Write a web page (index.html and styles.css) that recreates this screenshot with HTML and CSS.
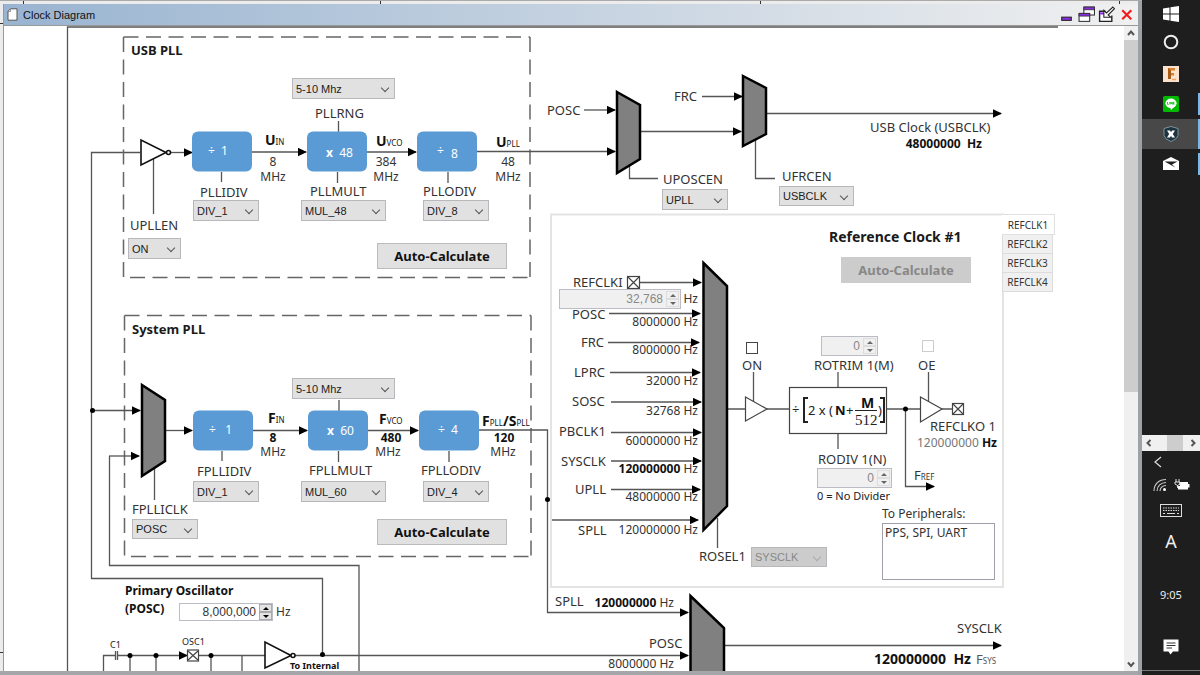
FILE: index.html
```html
<!DOCTYPE html>
<html lang="en">
<head>
<meta charset="utf-8">
<title>Clock Diagram</title>
<link rel="stylesheet" href="styles.css">
</head>
<body>
<div class="screen">
<main class="desk">
<section class="window">
<header class="titlebar">
  <svg class="doc-icon" viewBox="0 0 11 13"><path d="M3.5 .8H10V12.2H1V3.3Z" fill="#fff" stroke="#555"/><path d="M3.5 1V3.5H1" fill="none" stroke="#777" stroke-width=".7"/></svg>
  <h1>Clock Diagram</h1>
  <div class="window-buttons">
    <button aria-label="Minimize"><svg viewBox="0 0 16 16"><rect x="3.5" y="10.5" width="9" height="3" fill="#8a2be2" stroke="#222"/></svg></button>
    <button aria-label="Restore"><svg viewBox="0 0 16 16"><g fill="#fff" stroke="#333"><rect x="5.500" y="1" width="10" height="7.500"/><rect x="1" y="7" width="10" height="7.500"/></g><path d="M5.500 1h10v2.500h-10zM1 7h10v2.500H1z" fill="#8a2be2" stroke="#333" stroke-width=".8"/></svg></button>
    <button aria-label="Dock"><svg viewBox="0 0 16 16"><path d="M7 5H1.500V14.500H13V9" fill="#fff" stroke="#222" stroke-width="1.300"/><path d="M2 6h5v2H2z" fill="#8a2be2"/><path d="M14 1L15.500 2.500 9.500 8.500 12 10.500H5.500V4L8 6.500Z" fill="#fff" stroke="#222"/></svg></button>
    <button aria-label="Close"><svg viewBox="0 0 16 16"><path d="M4 4L12.500 12.500M12.500 4L4 12.500" stroke="#f01c1c" stroke-width="2"/></svg></button>
  </div>
</header>
<div class="body">
<div class="canvas">
<svg class="wires" width="1117" height="645" viewBox="4 26 1117 645">
  <defs>
    <marker id="arrow" markerUnits="userSpaceOnUse" markerWidth="9" markerHeight="9" refX="8" refY="4.5" orient="auto"><path d="M0 .3L9 4.500 0 8.700Z" fill="#000"/></marker>
  </defs>
  <g class="line">
    <path d="M67.500 671V27H1058"/>
    <path d="M140 152.500H91.500V578.500H322.500V655"/>
    <path d="M109.500 456V565.500H359V671"/>
    <path d="M153.500 159V214M221.500 172V182M338.500 121V132M337.500 172V183M448 172V183"/>
    <path d="M154.500 468V500M222 451V461M339 400V411M338.500 451V462M449 451V462"/>
    <path d="M629.500 166V178.500H658M755.500 140V178.500H775"/>
  </g>
  <g class="dash">
    <path d="M123.500 37H530M123.500 37V277M530 37V277M130 277.500H530"/>
    <path d="M124.500 315.500H531M124.500 315.500V556M531 315.500V556M131 556.500H531"/>
  </g>
  <g class="panel-lines">
    <rect x="551" y="214.500" width="452" height="372.500"/>
  </g>
  <g class="line arrowed">
    <path d="M171 152.500H192"/><path d="M252 152H306"/><path d="M367 152H416"/><path d="M477 151.500H615"/>
    <path d="M92 410.500H140"/><path d="M109 456H139"/><path d="M165 430.500H192"/><path d="M253 430.500H307"/><path d="M368 430.500H418"/>
    <path d="M478 430H547.500V612.500H688"/>
    <path d="M584 110H615"/><path d="M640 131.500H741"/><path d="M702 96.500H742"/><path d="M766 113.500H1001"/>
    <path d="M640 282.500H701"/><path d="M609 313.500H700"/><path d="M608 342.500H699"/><path d="M610 372.500H700"/><path d="M611 402H701"/><path d="M611 432.500H701"/><path d="M611 461H701"/><path d="M611 489.500H700"/><path d="M552 520H698"/>
    <path d="M905.500 409V486.500H934"/>
    <path d="M295 655.500H688"/><path d="M724 645.500H1001"/><path d="M117 655.500H187"/>
  </g>
  <g class="line">
    <path d="M717.500 518V548M727 409H745M767 409H789M753.500 372V402M838 372V387M838 434V449M887 409H920M928.500 372V402M942 409H952"/>
    <path d="M103.500 671V655.500H115M115.500 651V660M117.500 651V660M199 655.500H265M130 655V671M156 655V671M211 655V671M242 655V671"/>
  </g>
  <g class="shape">
    <path d="M745.500 397V421L767 409Z"/><path d="M920.500 397V422L942 409Z"/>
    <rect x="789.500" y="387.500" width="97" height="46"/>
    <rect x="627.500" y="276.500" width="12" height="12"/><path d="M628 277L639 288M639 277L628 288"/>
    <rect x="952.500" y="403.500" width="11" height="11"/><path d="M953 404L963 414M963 404L953 414"/>
    <rect x="187.500" y="650" width="11" height="11"/><path d="M188 651L198 660M198 651L188 660"/>
  </g>
  <g class="shape heavy">
    <path d="M141 140V165L166 152.500Z"/><circle cx="168.500" cy="152.500" r="2"/>
    <path d="M265 642V668L291 655.500Z"/><circle cx="293" cy="655.500" r="2"/>
  </g>
  <g class="mux">
    <path d="M617 92L640 105V159L617 173Z"/><path d="M743 76L766 88V134L743 146Z"/>
    <path d="M142 385L165 400V461L142 476Z"/><path d="M703.500 263L727 286V506L703.500 530Z"/>
    <path d="M690.500 596L724 628V680H690.500Z"/>
  </g>
  <g class="dot">
    <circle cx="92.500" cy="410.500" r="2.500"/><circle cx="547.500" cy="499.500" r="2.500"/><circle cx="905.500" cy="409" r="2.500"/><circle cx="322.500" cy="654.500" r="2.500"/>
    <circle cx="130" cy="655.500" r="2.500"/><circle cx="156" cy="655.500" r="2.500"/><circle cx="211" cy="655.500" r="2.500"/>
  </g>
  <g class="block">
    <rect x="192" y="131.500" width="60" height="40" rx="6"/><rect x="307" y="131.500" width="60" height="40" rx="6"/><rect x="417" y="131.500" width="60" height="40" rx="6"/>
    <rect x="193" y="410.500" width="60" height="40" rx="6"/><rect x="308" y="410.500" width="60" height="40" rx="6"/><rect x="419" y="410.500" width="60" height="40" rx="6"/>
  </g>
  <g class="block-text">
    <text x="208" y="155">÷&#160; 1</text><text x="326" y="157"><tspan font-weight="bold">x</tspan>&#160; 48</text><text x="437" y="155">÷</text><text x="451" y="158">8</text>
    <text x="209" y="434">÷&#160;&#160; 1</text><text x="327" y="435"><tspan font-weight="bold">x</tspan>&#160; 60</text><text x="438" y="434">÷&#160; 4</text>
  </g>
  <g class="signal">
    <text x="265" y="145">U<tspan class="sub">IN</tspan></text><text x="376" y="146">U<tspan class="sub">VCO</tspan></text><text x="496" y="147">U<tspan class="sub">PLL</tspan></text>
    <text x="268" y="423">F<tspan class="sub">IN</tspan></text><text x="379" y="424">F<tspan class="sub">VCO</tspan></text><text x="482" y="426">F<tspan class="sub">PLL</tspan>/S<tspan class="sub">PLL</tspan></text>
  </g>
  <g class="value middle">
    <text x="273" y="166">8</text><text x="273" y="181">MHz</text><text x="386" y="166">384</text><text x="386" y="181">MHz</text><text x="508" y="166">48</text><text x="508" y="181">MHz</text>
    <text class="bold" x="273" y="442">8</text><text x="273" y="456">MHz</text><text class="bold" x="391" y="442">480</text><text x="388" y="456">MHz</text><text class="bold" x="504" y="442">120</text><text x="503" y="456">MHz</text>
  </g>
  <g class="name">
    <text x="547" y="115">POSC</text><text x="674" y="101">FRC</text><text x="870" y="132">USB Clock (USBCLK)</text>
    <text x="572" y="319">POSC</text><text x="581" y="347">FRC</text><text x="574" y="377">LPRC</text><text x="572" y="406">SOSC</text><text x="559" y="436">PBCLK1</text><text x="561" y="466">SYSCLK</text><text x="575" y="494">UPLL</text><text x="578" y="535">SPLL</text>
    <text x="930" y="431">REFCLKO 1</text><text x="914" y="480">F<tspan class="sub">REF</tspan></text>
    <text x="555" y="606">SPLL</text><text x="649" y="648">POSC</text><text x="957" y="633">SYSCLK</text><text class="thin" x="976" y="664">F<tspan class="sub">SYS</tspan></text>
  </g>
  <g class="value end">
    <text x="698" y="303">Hz</text><text x="698" y="326">8000000 Hz</text><text x="698" y="354">8000000 Hz</text><text x="698" y="385">32000 Hz</text><text x="698" y="415">32768 Hz</text><text x="698" y="445">60000000 Hz</text><text x="698" y="473"><tspan class="bold">120000000</tspan> Hz</text><text x="698" y="501">48000000 Hz</text><text x="698" y="534">120000000 Hz</text>
    <text x="674" y="607"><tspan class="bold">120000000</tspan> Hz</text><text x="674" y="668">8000000 Hz</text>
    <text class="bold" x="982" y="148">48000000&#160; Hz</text><text x="997" y="447"><tspan fill="#777">120000000</tspan> <tspan class="bold">Hz</tspan></text>
    <text class="bold big" x="971" y="664">120000000&#160; Hz</text>
  </g>
  <g class="heading">
    <text x="131" y="55">USB PLL</text><text x="132" y="334">System PLL</text><text class="big" x="829" y="242">Reference Clock #1</text>
  </g>
  <g class="small"><text x="110" y="648">C1</text><text x="182" y="645">OSC1</text><text class="bold" x="290" y="669">To Internal</text><text class="note" x="817" y="500">0 = No Divider</text></g>
  <g class="formula">
    <text x="792" y="414">÷</text><path d="M808 398H804V422H808M880 398H884V422H880"/>
    <text x="808" y="415">2 x (</text><text class="bold" x="835" y="415">N</text><text x="846" y="415">+</text><text class="bold m" x="861" y="408">M</text><path class="bar" d="M855 410.500H877"/><text class="serif" x="855" y="425">512</text><text x="878" y="415">)</text>
  </g>
</svg>

<label class="pos l-pllrng" for="pllrng">PLLRNG</label>
<div class="pos pick wide p-pllrng"><select id="pllrng"><option>5-10 Mhz</option></select></div>
<label class="pos l-upllen" for="upllen">UPLLEN</label>
<div class="pos pick p-upllen"><select id="upllen"><option>ON</option></select></div>
<label class="pos l-pllidiv" for="pllidiv">PLLIDIV</label>
<div class="pos pick p-pllidiv"><select id="pllidiv"><option>DIV_1</option></select></div>
<label class="pos l-pllmult" for="pllmult">PLLMULT</label>
<div class="pos pick p-pllmult"><select id="pllmult"><option>MUL_48</option></select></div>
<label class="pos l-pllodiv" for="pllodiv">PLLODIV</label>
<div class="pos pick p-pllodiv"><select id="pllodiv"><option>DIV_8</option></select></div>
<button class="pos calc calc-usb">Auto-Calculate</button>

<div class="pos pick wide p-frng"><select aria-label="FPLLRNG"><option>5-10 Mhz</option></select></div>
<label class="pos l-fpllidiv" for="fpllidiv">FPLLIDIV</label>
<div class="pos pick p-fpllidiv"><select id="fpllidiv"><option>DIV_1</option></select></div>
<label class="pos l-fpllmult" for="fpllmult">FPLLMULT</label>
<div class="pos pick p-fpllmult"><select id="fpllmult"><option>MUL_60</option></select></div>
<label class="pos l-fpllodiv" for="fpllodiv">FPLLODIV</label>
<div class="pos pick p-fpllodiv"><select id="fpllodiv"><option>DIV_4</option></select></div>
<label class="pos l-fpllclk" for="fpllclk">FPLLICLK</label>
<div class="pos pick p-fpllclk"><select id="fpllclk"><option>POSC</option></select></div>
<button class="pos calc calc-sys">Auto-Calculate</button>

<label class="pos l-uposcen" for="uposcen">UPOSCEN</label>
<div class="pos pick p-uposcen"><select id="uposcen"><option>UPLL</option></select></div>
<label class="pos l-ufrcen" for="ufrcen">UFRCEN</label>
<div class="pos pick p-ufrcen"><select id="ufrcen"><option>USBCLK</option></select></div>

<nav class="pos tabs"><button class="current">REFCLK1</button><button>REFCLK2</button><button>REFCLK3</button><button>REFCLK4</button></nav>
<button class="pos calc calc-ref" disabled>Auto-Calculate</button>
<label class="pos l-refclki" for="refclki">REFCLKI</label>
<div class="pos spin off s-refclki"><input id="refclki" value="32,768" disabled><div class="steps"><button aria-label="Increase" disabled></button><button class="down" aria-label="Decrease" disabled></button></div></div>
<input class="pos check c-on" type="checkbox" id="on"><label class="pos l-on" for="on">ON</label>
<input class="pos check c-oe" type="checkbox" id="oe" disabled><label class="pos l-oe" for="oe">OE</label>
<div class="pos spin off s-rotrim"><input id="rotrim" value="0" disabled><div class="steps"><button aria-label="Increase" disabled></button><button class="down" aria-label="Decrease" disabled></button></div></div>
<label class="pos l-rotrim" for="rotrim">ROTRIM 1(M)</label>
<label class="pos l-rodiv" for="rodiv">RODIV 1(N)</label>
<div class="pos spin off s-rodiv"><input id="rodiv" value="0" disabled><div class="steps"><button aria-label="Increase" disabled></button><button class="down" aria-label="Decrease" disabled></button></div></div>
<label class="pos l-rosel" for="rosel">ROSEL1</label>
<div class="pos pick off p-rosel"><select id="rosel" disabled><option>SYSCLK</option></select></div>
<div class="pos peripherals"><label for="periph">To Peripherals:</label><textarea id="periph" readonly>PPS, SPI, UART</textarea></div>

<label class="pos posc-label" for="posc">Primary Oscillator<br>(POSC)</label>
<div class="pos spin s-posc"><input id="posc" value="8,000,000"><div class="steps"><button aria-label="Increase"></button><button class="down" aria-label="Decrease"></button></div></div>
<span class="pos posc-unit">Hz</span>
</div>
<div class="vscroll">
  <button aria-label="Scroll up"><svg viewBox="0 0 14 14"><path d="M4 9L7 5.500 10 9"/></svg></button>
  <div class="track"><div class="thumb"></div></div>
  <button aria-label="Scroll down"><svg viewBox="0 0 14 14"><path d="M4 5.500L7 9 10 5.500"/></svg></button>
</div>
</div>
</section>
</main>

<aside class="taskbar">
<div class="apps">
  <button class="short" aria-label="Start"><svg viewBox="0 0 16 16"><path d="M0 2.500L6.500 1.500V7.500H0ZM7.500 1.300L16 0V7.500H7.500ZM0 8.500H6.500V14.500L0 13.500ZM7.500 8.500H16V16L7.500 14.700Z" fill="#fff"/></svg></button>
  <button class="short" aria-label="Cortana"><svg viewBox="0 0 16 16"><circle cx="8" cy="8" r="6.300" fill="none" stroke="#eee" stroke-width="2"/></svg></button>
  <button class="spaced" aria-label="Fusion"><svg viewBox="0 0 16 16"><path d="M0 0H16V16H0Z" fill="#fbe3cf"/><path d="M5 2H12V4.500H8V7H11V9.500H8V13H5Z" fill="#d9822b"/><path d="M5 2L8 4.500V13H5Z" fill="#a85a18"/><path d="M9 13.500H13" stroke="#efa765" stroke-width="1.500"/></svg></button>
  <button class="running" aria-label="LINE"><svg viewBox="0 0 16 16"><rect width="16" height="16" rx="1.500" fill="#00b900"/><ellipse cx="8" cy="7.300" rx="5.600" ry="4.800" fill="#fff"/><path d="M7 11L8 14 11.500 10.500Z" fill="#fff"/><path d="M4.500 6V8.300H5.800M6.800 6V8.300M7.800 8.300V6L9.300 8.300V6M11.500 6.200H10.400V8.200H11.500M10.400 7.200H11.300" fill="none" stroke="#00b900" stroke-width=".8"/></svg></button>
  <button class="running active" aria-label="MPLAB X"><svg viewBox="0 0 16 16"><path d="M8 .5L15 2.500V9.500Q14.500 13 8 15.500Q1.500 13 1 9.500V2.500Z" fill="#1c3440" stroke="#7d929b"/><path d="M4 4.500H7L8 6.200 9 4.500H12L9.800 8 12 11.500H9L8 9.800 7 11.500H4L6.200 8Z" fill="#fff"/></svg></button>
  <button class="running" aria-label="Mail"><svg viewBox="0 0 16 16"><path d="M0 5L8 1 16 5V14H0Z" fill="#fff"/><path d="M1.500 5.500H14.500L9 8.500 12.500 11.500Z" fill="#1e1e1e"/></svg></button>
</div>
<div class="tray">
  <div class="hscroll"><button aria-label="Scroll left"><svg viewBox="0 0 14 14"><path d="M8.500 4L5.500 7 8.500 10"/></svg></button><div class="hthumb"></div><button aria-label="Scroll right"><svg viewBox="0 0 14 14"><path d="M5.500 4L8.500 7 5.500 10"/></svg></button></div>
  <button class="more" aria-label="Show hidden icons"><svg viewBox="0 0 12 12"><path d="M9 1L3 6 9 11" fill="none" stroke="#ddd" stroke-width="1.200"/></svg></button>
  <div class="status">
    <svg viewBox="0 0 14 14"><g fill="none" stroke="#ccc" stroke-width="1.100"><path d="M1 13C1 6 6 1.500 13 1.500"/><path d="M4 13C4 8 8 4.500 13 4.500"/><path d="M7 13C7 10 9.500 7.500 13 7.500"/></g><circle cx="11.500" cy="11.500" r="1.500" fill="#fff"/></svg>
    <svg class="battery" viewBox="0 0 16 14"><path d="M5 4H14V6H15.500V9.500H14V11.500H4V8H6Z" fill="#fff"/><path d="M2 1V4M5 1V4M1 4H6V6L3.500 7.500 1 6ZM3.500 7V10" fill="none" stroke="#ddd"/></svg>
  </div>
  <div class="keyboard"><svg viewBox="0 0 22 13"><rect x=".5" y=".5" width="21" height="12" fill="none" stroke="#ddd"/><path d="M3 4H19M3 6.500H19" stroke="#ddd" stroke-width="1.200" stroke-dasharray="1.500 1"/><path d="M3 9.500H5M7 9.500H15M17 9.500H19" stroke="#ddd" stroke-width="1.200"/></svg></div>
  <div class="ime">A</div>
  <time class="clock">9:05</time>
  <button class="chat" aria-label="Notifications"><svg viewBox="0 0 16 16"><path d="M.5 .5H15.500V12.500H10L7.500 15.500 5.500 12.500H.5Z" fill="#fff"/><path d="M3.500 4H12.500M3.500 6.500H12.500M3.500 9H9" stroke="#333"/></svg></button>
  <div class="edge"></div>
</div>
</aside>
</div>
</body>
</html>
```
FILE: styles.css
```css
* { box-sizing: border-box; }
body { margin: 0; font-family: "Noto Sans", "Open Sans", sans-serif; font-size: 13px; color: #333; }
button { border: 0; padding: 0; background: none; font: inherit; color: inherit; display: grid; place-items: center; }
.screen { display: flex; height: 100vh; overflow: hidden; }

.desk {
  flex: 1; min-width: 0; display: flex; padding: 3px 4px 4px 3px;
  border-top: 1px solid #aaa;
  background:
    linear-gradient(#333, #333) 23px 0 / 1px 3px no-repeat,
    linear-gradient(#333, #333) 380px 0 / 1px 3px no-repeat,
    linear-gradient(#333, #333) 760px 0 / 1px 3px no-repeat,
    linear-gradient(#333, #333) 1119px 0 / 1px 3px no-repeat,
    linear-gradient(#333, #333) 0 22px / 3px 1px no-repeat,
    linear-gradient(#333, #333) 0 651px / 3px 1px no-repeat,
    linear-gradient(#9da1a8, #9da1a8) right bottom / 4px 100% no-repeat,
    linear-gradient(#a4a6aa, #a4a6aa) 0 100% / 100% 4px no-repeat,
    #ececec;
}
.window { flex: 1; min-width: 0; display: flex; flex-direction: column; border-left: 1px solid #999; }
.titlebar { height: 22px; display: flex; align-items: center; gap: 5px; padding: 0 3px; background: linear-gradient(90deg, #99b4d1, #f0f0f0); border-bottom: 1px solid #999; }
.titlebar h1 { margin: 0; font: 11px "Liberation Sans", Arial, sans-serif; color: #111; }
.doc-icon { width: 11px; height: 13px; }
.window-buttons { margin-left: auto; display: flex; gap: 3px; }
.window-buttons svg { width: 17px; height: 17px; display: block; }
.body { flex: 1; min-height: 0; display: flex; background: #fff; }
.canvas { flex: 1; min-width: 0; position: relative; overflow: hidden; }
.vscroll { width: 14px; display: flex; flex-direction: column; background: #f0f0f0; }
.vscroll svg, .hscroll svg { width: 14px; height: 14px; fill: none; stroke: #555; stroke-width: 2; display: block; }
.track { flex: 1; }
.thumb { height: 57%; background: #cdcdcd; }

.wires { display: block; }
.line { fill: none; stroke: #555; stroke-width: 1.3px; }
.arrowed path { marker-end: url(#arrow); }
.dash { fill: none; stroke: #666; stroke-width: 1.5px; stroke-dasharray: 15 7.5; }
.panel-lines { fill: none; stroke: #e4e4e4; stroke-width: 2px; }
.shape { fill: #fff; stroke: #444; stroke-width: 1.2px; }
.heavy { stroke: #111; stroke-width: 1.6px; }
.mux { fill: #808080; stroke: #000; stroke-width: 2.5px; }
.dot { fill: #000; }
.block { fill: #5b9bd5; }
.block-text { fill: #fff; font-size: 12px; }
.signal { font-size: 14px; font-weight: bold; fill: #111; }
.sub { font-size: 8px; font-weight: normal; }
.value { font-size: 12px; fill: #333; }
.middle { text-anchor: middle; }
.end { text-anchor: end; }
.bold { font-weight: bold; fill: #111; }
.big { font-size: 14px; }
.name { font-size: 13px; fill: #333; }
.thin { fill: #555; }
.heading { font-weight: bold; fill: #1a1a1a; }
.small { font-size: 9px; fill: #222; }
.note { font-size: 11px; }
.formula { font-size: 13px; fill: #222; }
.formula path { fill: none; stroke: #222; stroke-width: 2px; }
.formula .bar { stroke-width: 1px; }
.formula .m { font-size: 14px; }
.serif { font-family: "Liberation Serif", serif; font-size: 15px; }

.pos { position: absolute; line-height: 16px; white-space: nowrap; }
.pick { width: 66px; height: 21px; background: #e1e1e1; border: 1px solid #b8b8bc; }
.pick select { appearance: none; width: 100%; height: 100%; border: 0; padding: 0 3px; background: none; font: 11px "Liberation Sans", Arial, sans-serif; color: #222; display: block; opacity: 1; }
.pick::after { content: ""; position: absolute; right: 6px; top: 6px; width: 5px; height: 5px; border: solid #555; border-width: 0 1px 1px 0; transform: rotate(45deg); pointer-events: none; }
.pick.wide { width: 103px; }
.pick.off { background: #ccc; }
.pick.off select { color: #888; }
.pick.off::after { border-color: #aaa; }
.calc { width: 130px; height: 26px; background: #e1e1e1; border: 1px solid #bbb; font-weight: bold; color: #111; }
.calc:disabled { background: #ccc; border-color: #ccc; color: #888; }
.spin { height: 20px; display: flex; border: 1px solid #bcbcc4; background: #fff; padding: 1px; }
.spin input { flex: 1; min-width: 0; width: 0; border: 0; padding: 0 3px; text-align: right; background: none; font: 12px "Liberation Sans", Arial, sans-serif; color: #333; }
.spin.off { background: #f0f0f0; }
.spin.off input { color: #888; }
.steps { width: 13px; display: flex; flex-direction: column; }
.steps button { flex: 1; background: #f0f0f0; border: 1px solid #ddd; }
.steps button::after { content: ""; border: 3px solid transparent; border-top: 0; border-bottom: 3px solid #666; }
.steps .down::after { border-bottom: 0; border-top: 3px solid #666; }
.s-posc .steps button { border-color: #aaa; background: #e4e4e4; }
.s-posc .steps button::after { border-bottom-color: #000; }
.s-posc .steps .down::after { border-top-color: #000; }
.check { appearance: none; width: 12px; height: 12px; margin: 0; border: 1px solid #444; background: #fff; }
.check:disabled { border-color: #ccc; }
.tabs { left: 998px; top: 188px; display: flex; flex-direction: column; align-items: flex-start; }
.tabs button { width: 51px; height: 19px; background: #f0f0f0; border: 1px solid #dcdcdc; border-top: 0; font-size: 10px; }
.tabs .current { width: 53px; height: 21px; background: #fff; border: 1px solid #e0e0e0; border-left: 0; }
.peripherals { left: 878px; top: 480px; width: 113px; font-size: 12px; display: flex; flex-direction: column; gap: 1px; }
.peripherals textarea { height: 57px; resize: none; border: 1px solid #a0a0a8; padding: 1px 2px; font: 12px/16px "Noto Sans", sans-serif; color: #333; background: #fff; }

.l-pllrng { left: 311px; top: 79px; }
.p-pllrng { left: 288px; top: 52px; }
.l-upllen { left: 126px; top: 191px; }
.p-upllen { left: 124px; top: 212px; width: 53px; }
.l-pllidiv { left: 196px; top: 158px; }
.p-pllidiv { left: 189px; top: 174px; }
.l-pllmult { left: 306px; top: 157px; }
.p-pllmult { left: 297px; top: 174px; width: 85px; }
.l-pllodiv { left: 419px; top: 157px; }
.p-pllodiv { left: 419px; top: 174px; }
.calc-usb { left: 373px; top: 217px; }
.p-frng { left: 288px; top: 352px; }
.l-fpllidiv { left: 193px; top: 437px; }
.p-fpllidiv { left: 189px; top: 455px; }
.l-fpllmult { left: 305px; top: 436px; }
.p-fpllmult { left: 297px; top: 455px; width: 85px; }
.l-fpllodiv { left: 417px; top: 436px; }
.p-fpllodiv { left: 419px; top: 455px; }
.l-fpllclk { left: 128px; top: 475px; }
.p-fpllclk { left: 128px; top: 493px; height: 20px; }
.calc-sys { left: 373px; top: 493px; }
.l-uposcen { left: 659px; top: 145px; }
.p-uposcen { left: 658px; top: 163px; }
.l-ufrcen { left: 778px; top: 142px; }
.p-ufrcen { left: 775px; top: 160px; width: 75px; height: 20px; }
.calc-ref { left: 837px; top: 231px; }
.l-refclki { left: 569px; top: 248px; }
.s-refclki { left: 555px; top: 263px; width: 122px; }
.c-on { left: 742px; top: 316px; }
.l-on { left: 738px; top: 331px; }
.c-oe { left: 918px; top: 314px; }
.l-oe { left: 914px; top: 331px; }
.s-rotrim { left: 817px; top: 310px; width: 57px; }
.l-rotrim { left: 810px; top: 331px; }
.l-rodiv { left: 814px; top: 425px; }
.s-rodiv { left: 813px; top: 442px; width: 75px; }
.l-rosel { left: 695px; top: 522px; }
.p-rosel { left: 747px; top: 521px; width: 76px; height: 20px; }
.posc-label { left: 121px; top: 556px; font-size: 12px; line-height: 18px; font-weight: bold; color: #111; }
.s-posc { left: 175px; top: 577px; width: 94px; height: 18px; padding: 0; }
.posc-unit { left: 272px; top: 578px; font-size: 12px; }

.taskbar { width: 58px; display: flex; flex-direction: column; background: #1e1e1e; color: #eee; }
.apps { display: flex; flex-direction: column; }
.apps button { height: 30px; position: relative; }
.apps .short { height: 28px; }
.apps .spaced { margin-top: 3px; }
.apps svg { width: 16px; height: 16px; }
.apps .active { background: #484848; }
.running::after { content: ""; position: absolute; right: 0; top: 4px; bottom: 4px; width: 2px; background: #76b9ed; }
.active::after { top: 0; bottom: 0; }
.tray { margin-top: auto; display: flex; flex-direction: column; }
.hscroll { height: 16px; display: flex; align-items: center; justify-content: space-between; background: #f0f0f0; }
.hthumb { width: 16px; height: 100%; margin-left: 8px; background: #cdcdcd; }
.more { height: 22px; width: 32px; }
.more svg { width: 12px; height: 12px; }
.status { height: 24px; display: flex; align-items: center; justify-content: center; gap: 7px; }
.status svg { width: 14px; height: 14px; }
.status .battery { width: 16px; }
.keyboard { height: 26px; display: grid; place-items: center; }
.keyboard svg { width: 22px; height: 13px; }
.ime { height: 36px; font-size: 18px; line-height: 36px; text-align: center; }
.clock { height: 72px; font-size: 11px; line-height: 72px; text-align: center; }
.chat { height: 32px; }
.chat svg { width: 16px; height: 16px; }
.edge { height: 5px; margin-top: 7px; border-top: 1px solid #777; }
```
